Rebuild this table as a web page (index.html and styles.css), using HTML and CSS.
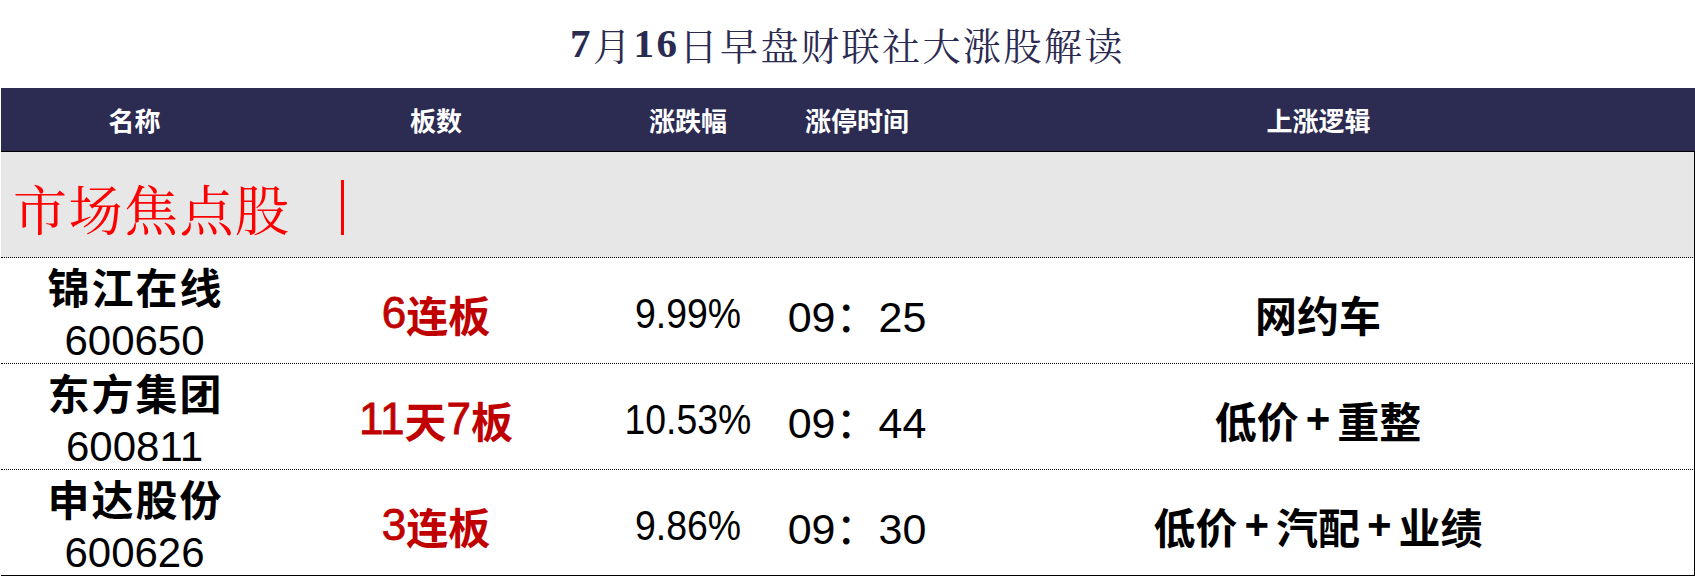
FILE: index.html
```html
<!DOCTYPE html>
<html lang="zh-CN">
<head>
<meta charset="utf-8">
<title>7月16日早盘财联社大涨股解读</title>
<link rel="stylesheet" href="styles.css">
</head>
<body>
<div class="page">
  <h1 class="title"><span class="num">7</span>月<span class="num">16</span>日早盘财联社大涨股解读</h1>
  <div class="table">
    <div class="head row-grid">
      <div class="cell">名称</div>
      <div class="cell">板数</div>
      <div class="cell">涨跌幅</div>
      <div class="cell">涨停时间</div>
      <div class="cell">上涨逻辑</div>
    </div>
    <div class="section">
      <span class="section-text">市场焦点股</span><span class="section-bar"></span>
    </div>
    <div class="row row-grid">
      <div class="cell name"><span class="cn">锦江在线</span><span class="code">600650</span></div>
      <div class="cell board"><span class="d">6</span>连板</div>
      <div class="cell pct"><span class="narrow">9.99%</span></div>
      <div class="cell time">09：25</div>
      <div class="cell logic">网约车</div>
    </div>
    <div class="row row-grid">
      <div class="cell name"><span class="cn">东方集团</span><span class="code">600811</span></div>
      <div class="cell board"><span class="d">11</span>天<span class="d">7</span>板</div>
      <div class="cell pct"><span class="narrow">10.53%</span></div>
      <div class="cell time">09：44</div>
      <div class="cell logic">低价<span class="plus">+</span>重整</div>
    </div>
    <div class="row row-grid last">
      <div class="cell name"><span class="cn">申达股份</span><span class="code">600626</span></div>
      <div class="cell board"><span class="d">3</span>连板</div>
      <div class="cell pct"><span class="narrow">9.86%</span></div>
      <div class="cell time">09：30</div>
      <div class="cell logic">低价<span class="plus">+</span>汽配<span class="plus">+</span>业绩</div>
    </div>
  </div>
</div>
</body>
</html>
```
FILE: styles.css
```css
html, body {
  margin: 0;
  padding: 0;
  background: #ffffff;
}

.page {
  width: 1695px;
  font-family: "Liberation Sans", "Noto Sans CJK SC", sans-serif;
}

.title {
  margin: 0;
  height: 88px;
  display: flex;
  align-items: center;
  justify-content: center;
  padding-bottom: 2px;
  box-sizing: border-box;
  font-family: "Noto Serif CJK SC", "Noto Sans CJK SC", serif;
  font-weight: 400;
  font-size: 38px;
  letter-spacing: 2.5px;
  color: #2b2a50;
}

.title .num {
  font-family: "Liberation Serif", serif;
  font-weight: 700;
  font-size: 41px;
}

.table {
  margin-left: 1px;
  width: 1694px;
}

.row-grid {
  display: grid;
  grid-template-columns: 267px 336px 168px 170px 1fr;
}

.cell {
  display: flex;
  align-items: center;
  justify-content: center;
  text-align: center;
}

.head {
  height: 63px;
  background: #2c2b52;
  color: #ffffff;
  font-family: "Noto Sans CJK SC", sans-serif;
  font-weight: 700;
  font-size: 26px;
}

.section {
  height: 107px;
  box-sizing: border-box;
  background: #e7e7e7;
  border-top: 1px solid #000;
  border-bottom: 1px dotted #000;
  border-right: 1px solid #000;
  display: flex;
  align-items: center;
  padding-left: 12px;
  padding-top: 6px;
}

.section-text {
  font-family: "Noto Serif CJK SC", "Noto Sans CJK SC", serif;
  font-weight: 400;
  font-size: 54px;
  letter-spacing: 1.5px;
  color: #ff0000;
}

.section-bar {
  width: 3px;
  height: 55px;
  background: #ff0000;
  margin-left: 50px;
}

.row {
  height: 106px;
  box-sizing: border-box;
  border-bottom: 1px dotted #000;
  border-right: 1px solid #000;
  color: #000;
}

.row.last {
  border-bottom: 1px solid #000;
}

.name {
  flex-direction: column;
  font-family: "Noto Sans CJK SC", sans-serif;
  font-weight: 700;
  font-size: 42px;
  line-height: 55px;
}

.name .cn {
  letter-spacing: 2px;
  margin-right: -2px;
}

.name .code {
  font-family: "Liberation Sans", sans-serif;
  font-weight: 400;
  font-size: 42px;
}

.board {
  color: #c00000;
  font-family: "Noto Sans CJK SC", sans-serif;
  font-weight: 700;
  font-size: 42px;
}

.board .d {
  font-family: "Liberation Sans", sans-serif;
  font-weight: 400;
  font-size: 44px;
  -webkit-text-stroke: 0.8px #c00000;
}

.pct, .time {
  font-family: "Liberation Sans", "Noto Sans CJK SC", sans-serif;
  font-size: 43px;
}

.narrow {
  display: inline-block;
  transform: scaleX(0.87);
}

.logic {
  font-family: "Noto Sans CJK SC", sans-serif;
  font-weight: 700;
  font-size: 42px;
}

.logic .plus {
  font-family: "Liberation Sans", sans-serif;
  font-weight: 700;
  margin: 0 7px;
}
```
